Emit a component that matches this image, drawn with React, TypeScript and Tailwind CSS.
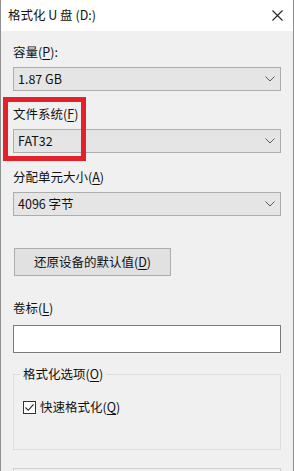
import React from 'react';

const font = { fontFamily: '"Microsoft YaHei UI", "Noto Sans CJK SC", "Noto Sans", sans-serif' };

function Chevron() {
  return (
    <svg width="10" height="6" viewBox="0 0 10 6" className="shrink-0">
      <path d="M0.5 0.5 L5 5 L9.5 0.5" fill="none" stroke="#5a5a5a" strokeWidth="1" />
    </svg>
  );
}

function Combo({ value }: { value: string }) {
  return (
    <div className="h-[24px] bg-[#e5e5e5] border border-[#adadad] flex items-center justify-between pl-[4px] pr-[5px]">
      <span className="text-[12.5px] leading-none text-[#111]">{value}</span>
      <Chevron />
    </div>
  );
}

function Label({ text, k, tail = '' }: { text: string; k: string; tail?: string }) {
  return (
    <div className="h-[16px] leading-[16px] text-[12.5px] text-[#111]">
      {text}(<span className="underline underline-offset-2">{k}</span>){tail}
    </div>
  );
}

export default function App() {
  return (
    <div style={font} className="relative w-[294px] h-[471px] overflow-hidden bg-[#f0f0f0] border-x border-[#8f8f8f] select-none">
      {/* Title bar */}
      <div className="h-[31px] bg-white flex items-center justify-between pl-[7px] pr-[10px]">
        <span className="text-[12.5px] text-[#111]">格式化 U 盘 (D:)</span>
        <svg width="11" height="11" viewBox="0 0 11 11">
          <path d="M0.5 0.5 L10.5 10.5 M10.5 0.5 L0.5 10.5" stroke="#222" strokeWidth="1.1" />
        </svg>
      </div>

      <div className="pl-[12px] pr-[12px] flex flex-col">
        <div className="mt-[13px]"><Label text="容量" k="P" tail=":" /></div>
        <div className="mt-[7px]"><Combo value="1.87 GB" /></div>

        <div className="mt-[15px]"><Label text="文件系统" k="F" /></div>
        <div className="mt-[7px]"><Combo value="FAT32" /></div>

        <div className="mt-[16px]"><Label text="分配单元大小" k="A" /></div>
        <div className="mt-[7px]"><Combo value="4096 字节" /></div>

        <div className="mt-[32px] ml-[1px] w-[157px] h-[28px] bg-[#e1e1e1] border border-[#adadad] flex items-center justify-center text-[12.5px] text-[#111]">
          还原设备的默认值(<span className="underline underline-offset-2">D</span>)
        </div>

        <div className="mt-[24px]"><Label text="卷标" k="L" /></div>
        <div className="mt-[9px] h-[28px] bg-white border border-[#7a7a7a]" />

        {/* Group box */}
        <div className="relative mt-[21px] h-[76px] border border-[#dcdcdc]">
          <div className="absolute -top-[9px] left-[6px] px-[3px] bg-[#f0f0f0]">
            <Label text="格式化选项" k="O" />
          </div>
          <div className="mt-[24px] ml-[9px] flex items-center gap-[4px]">
            <div className="w-[13px] h-[13px] border border-[#333] bg-white flex items-center justify-center">
              <svg width="11" height="11" viewBox="0 0 11 11">
                <path d="M1.5 5.5 L4.3 8.3 L9.5 2.3" fill="none" stroke="#222" strokeWidth="1.1" />
              </svg>
            </div>
            <Label text="快速格式化" k="Q" />
          </div>
        </div>

        <div className="mt-[18px] h-[30px] border border-[#cfcfcf]" />
      </div>

      {/* Red annotation frame */}
      <div className="absolute left-[2px] top-[97px] w-[83px] h-[64px] border-[5px] border-[#e2212b]" />
    </div>
  );
}
